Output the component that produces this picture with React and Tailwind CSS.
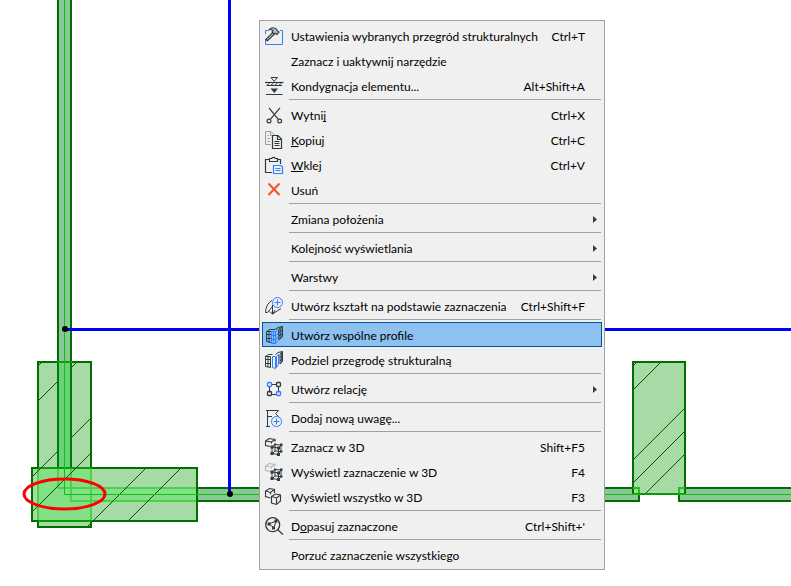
import React, { useState } from 'react';

const DARK = '#2f3a40';
const BLUE = '#2f80ff';

function Icon({ children }) {
    return (
        <svg width="20" height="21" viewBox="0 0 20 21" fill="none" stroke={DARK} strokeWidth="1" className="shrink-0" aria-hidden="true">
            {children}
        </svg>
    );
}

function SettingsIcon() {
    return (
        <Icon>
            <path d="M4 5.5H1.5V9M1.5 14V19.5H18.5V5.5H16" stroke={BLUE} />
            <path d="M9 7.5L2 14.2L3.3 15.8L10.5 9" fill="#f0f0f0" strokeWidth="1.2" />
            <path d="M5.2 4.6Q8.5 1.2 12.5 4.2L13.2 5.6L15 7L13 9.4L11.3 8.2L10.2 9.2L8 7L9 5.6Q7.3 4 5.2 4.6Z" fill="#b8bcbe" strokeWidth="1.1" />
        </Icon>
    );
}

function StoryIcon() {
    return (
        <Icon>
            <path d="M7 2.5H13.5L10.2 6.3Z" />
            <path d="M1 7.5H19.5" strokeWidth="1.2" />
            <path d="M3 10.3L5.5 8M7 10.3L9.5 8M11 10.3L13.5 8M15 10.3L17.5 8M2.5 10.5H18" />
            <path d="M6.5 13.5H14L10.3 18Z" fill={DARK} stroke="none" />
            <path d="M2 19.5H18.5" />
        </Icon>
    );
}

function CutIcon() {
    return (
        <Icon>
            <path d="M5 3.8L14.3 15.3M16 3.8L6.3 15.3" strokeWidth="1.2" />
            <circle cx="5" cy="17" r="1.9" strokeWidth="1.2" />
            <circle cx="15.7" cy="17" r="1.9" strokeWidth="1.2" />
        </Icon>
    );
}

function CopyIcon() {
    return (
        <Icon>
            <path d="M7 15.5H1.5V2.5H7L10.5 6M6.5 2.5V6.5H9M3.5 6.5H5M3.5 9.5H6M3.5 12.5H6" stroke="#9b9fa1" />
            <path d="M8.5 6.5H14L17.5 10V19.5H8.5ZM13.5 6.5V10.5H17.5" strokeWidth="1.2" />
            <path d="M10.5 12.5H15.5M10.5 14.5H15.5M10.5 16.5H15.5" />
        </Icon>
    );
}

function PasteIcon() {
    return (
        <Icon>
            <path d="M5.5 5.5H1.5V18.5H8M13 5.5H16.5V10" strokeWidth="1.2" />
            <path d="M5.5 7.5V4.5H7.5Q9.5 2.2 11.5 4.5H13.5V7.5Z" strokeWidth="1.2" />
            <path d="M9.5 11.5H17L18.5 13V19.5H9.5ZM11.5 14.5H16.5M11.5 16.5H16.5" stroke={BLUE} strokeWidth="1.2" />
        </Icon>
    );
}

function DeleteIcon() {
    return (
        <Icon>
            <path d="M4.5 4.5L15.5 16M15.5 4.5L4.5 16" stroke="#f4512c" strokeWidth="2" />
        </Icon>
    );
}

function ShapeIcon() {
    return (
        <Icon>
            <path d="M8 5.5Q2 8.5 1.5 17.5H3.5L8 12M8.5 10V19L17 13.5M5.5 16.5L8.5 19L11 15" />
            <circle cx="13.5" cy="7.5" r="5" fill="#f0f0f0" stroke={BLUE} />
            <path d="M10.5 7.5H16.5M13.5 4.5V10.5" stroke={BLUE} />
        </Icon>
    );
}

function MergeProfileIcon() {
    return (
        <Icon>
            <path d="M2.5 7.5H7.5M2.5 7.5V17.5L7 18.5M5 7.5V18M2.5 10.5H7M2.5 14.5H7M2.5 7.5L6 5.5H11" />
            <path d="M7.5 7.5V19.5H11.5V7.5ZM9.5 7.5V19.5M7.5 11.5H11.5M7.5 15.5H11.5M11.5 7.5L14.5 5V16L11.5 19.5M11.5 11.5L14.5 9M11.5 15.5L14.5 13" stroke={BLUE} />
            <path d="M11 5.5L14 3.5L18.5 2.5V13L15 15.5V5L18.5 2.5M16.8 4V14M15 8.5L18.5 6M15 12L18.5 9.5" />
        </Icon>
    );
}

function SplitProfileIcon() {
    return (
        <Icon>
            <path d="M1.5 7.5H6.5V18.5L1.5 17.5ZM4 7.5V18M1.5 10.5H6.5M1.5 14.5H6.5M1.5 7.5L4.5 5.5H8.5" />
            <path d="M8.5 7.5H11.5V19.5L8.5 18.5ZM12.5 7.5L14.5 5.5V15.5L12.5 18.5Z" stroke={BLUE} />
            <path d="M11.5 5.5L14 3.5L18.5 2.5V12.5L16 15V5L18.5 2.5M17.3 4V13.5M16 8.5L18.5 6M16 12L18.5 9.5" />
        </Icon>
    );
}

function RelationIcon() {
    return (
        <Icon>
            <path d="M7 6.5H13M7 16.5H13M5.5 8.5V14.5M14.5 8.5V14.5" />
            <rect x="3.5" y="4.5" width="4" height="4" rx="1" stroke={BLUE} strokeWidth="1.3" />
            <rect x="12.5" y="4.5" width="4" height="4" rx="1" strokeWidth="1.3" />
            <rect x="3.5" y="13.5" width="4" height="4" rx="1" strokeWidth="1.3" />
            <rect x="12.5" y="13.5" width="4" height="4" rx="1" stroke={BLUE} strokeWidth="1.3" />
        </Icon>
    );
}

function NoteIcon() {
    return (
        <Icon>
            <path d="M2 19.5H6M3.5 19.5V3.5M2 3.5H14.5L11.5 6.5L14.5 9.5M3.5 9.5H8" />
            <circle cx="12.5" cy="14.5" r="5" stroke={BLUE} />
            <path d="M9.5 14.5H15.5M12.5 11.5V17.5" stroke={BLUE} />
        </Icon>
    );
}

function SelectCubeIcon({ back = DARK }) {
    return (
        <Icon>
            <path d="M6 10.5L1.5 9.5V5L5 2.5L11 3.5V5.5M1.5 5L7.5 6L11 3.5M7.5 6V7.5" stroke={back} strokeWidth="1.1" />
            <path d="M8 11L11 8.5L17 9L14.5 12L8 11V17.5L14.5 18.5V12M17 9V15.5L14.5 18.5M11 8.5V15L8 17.5M11 15L17 15.5" />
            <path d="M6.5 9.5h3v3h-3zM13 10.5h3v3h-3zM10 7.5h2v2h-2zM16 7.5h2.5v2.5h-2.5zM6.5 16h3v3h-3zM13 17h3v3h-3zM16 14.5h2.5v2h-2.5z" fill={DARK} stroke="none" />
        </Icon>
    );
}

function CubesIcon() {
    return (
        <Icon>
            <path d="M6.5 12L1.5 10.5V5L5.5 2.5L10.5 3.5V7M1.5 5L6.5 6.5L10.5 3.5M6.5 6.5V8.5" strokeWidth="1.1" />
            <path d="M7.5 10.5L11.5 8L16.5 9V15L12.5 18.5L7.5 17ZM7.5 10.5L12.5 12L16.5 9M12.5 12V18.5" fill="#f0f0f0" strokeWidth="1.1" />
        </Icon>
    );
}

function FitIcon() {
    return (
        <Icon>
            <circle cx="8.7" cy="9.7" r="7" strokeWidth="1.3" />
            <path d="M13.5 14.5L19 19.5" strokeWidth="1.3" />
            <path d="M5 9L12 6L10 13Z" />
            <path d="M3.5 7.5h3v3h-3zM10.5 4.5h3v3h-3zM8 11.5h3v3h-3z" fill={DARK} stroke="none" />
        </Icon>
    );
}

const menuGroups = [
    [
        { label: 'Ustawienia wybranych przegród strukturalnych', keys: 'Ctrl+T', icon: <SettingsIcon /> },
        { label: 'Zaznacz i uaktywnij narzędzie' },
        { label: 'Kondygnacja elementu...', keys: 'Alt+Shift+A', icon: <StoryIcon /> },
    ],
    [
        { label: <>Wytni<u>j</u></>, keys: 'Ctrl+X', icon: <CutIcon /> },
        { label: <><u>K</u>opiuj</>, keys: 'Ctrl+C', icon: <CopyIcon /> },
        { label: <><u>W</u>klej</>, keys: 'Ctrl+V', icon: <PasteIcon /> },
        { label: 'Usuń', icon: <DeleteIcon /> },
    ],
    [{ label: 'Zmiana położenia', submenu: true }],
    [{ label: 'Kolejność wyświetlania', submenu: true }],
    [{ label: 'Warstwy', submenu: true }],
    [{ label: 'Utwórz kształt na podstawie zaznaczenia', keys: 'Ctrl+Shift+F', icon: <ShapeIcon /> }],
    [
        { label: 'Utwórz wspólne profile', id: 'merge', icon: <MergeProfileIcon /> },
        { label: 'Podziel przegrodę strukturalną', icon: <SplitProfileIcon /> },
    ],
    [{ label: 'Utwórz relację', submenu: true, icon: <RelationIcon /> }],
    [{ label: 'Dodaj nową uwagę...', icon: <NoteIcon /> }],
    [
        { label: 'Zaznacz w 3D', keys: 'Shift+F5', icon: <SelectCubeIcon /> },
        { label: 'Wyświetl zaznaczenie w 3D', keys: 'F4', icon: <SelectCubeIcon back="#b4b7b8" /> },
        { label: 'Wyświetl wszystko w 3D', keys: 'F3', icon: <CubesIcon /> },
    ],
    [{ label: <>D<u>o</u>pasuj zaznaczone</>, keys: "Ctrl+Shift+'", icon: <FitIcon /> }],
    [{ label: 'Porzuć zaznaczenie wszystkiego' }],
];

function MenuItem({ item, active, onHover }) {
    return (
        <button
            type="button"
            role="menuitem"
            aria-haspopup={item.submenu ? 'menu' : undefined}
            onMouseEnter={onHover}
            className={`flex h-[25px] w-full items-center gap-[7px] border pl-px text-left ${active ? 'border-[#005499] bg-[#8ec1ef]' : 'border-transparent'}`}
        >
            {item.icon || <span className="w-5 shrink-0" />}
            <span className="flex-1 whitespace-nowrap pt-0.5 [text-decoration-skip-ink:none]">{item.label}</span>
            {item.keys && <span className="mr-4 whitespace-nowrap pt-0.5">{item.keys}</span>}
            {item.submenu && (
                <svg width="4" height="9" viewBox="0 -2 4 9" className="mr-1 shrink-0" aria-hidden="true">
                    <path d="M0 0L4 3.5L0 7Z" fill="#3c3c3c" />
                </svg>
            )}
        </button>
    );
}

function ContextMenu() {
    const [activeId, setActiveId] = useState('merge');

    return (
        <div role="menu" className="absolute left-[259px] top-5 w-[346px] border border-[#a0a0a0] bg-[#f0f0f0] p-0.5">
            {menuGroups.map((group, g) => (
                <React.Fragment key={g}>
                    {g > 0 && <hr className="mb-0.5 ml-[27px] mr-px mt-px border-[#a0a0a0]" />}
                    {group.map((item, i) => {
                        const id = item.id || `${g}-${i}`;
                        return <MenuItem key={id} item={item} active={activeId === id} onHover={() => setActiveId(id)} />;
                    })}
                </React.Fragment>
            ))}
        </div>
    );
}

function FloorPlan() {
    return (
        <svg className="block h-screen w-full" fill="none" aria-hidden="true">
            {/* thin walls */}
            <rect x="57" y="0" width="15" height="502" fill="#8ac796" />
            <rect x="72" y="487" width="568" height="15" fill="#8ac796" />
            <rect x="678" y="487" width="100%" height="15" fill="#8ac796" />
            <path d="M58 0V488M71 0V502" stroke="#006f00" strokeWidth="2" />
            <path d="M57 488H639V501H70" stroke="#006f00" strokeWidth="2" />
            <rect x="679" y="488" width="100%" height="13" stroke="#006f00" strokeWidth="2" />

            {/* columns with hatching */}
            <rect x="38" y="362" width="53" height="165" fill="#a6dba6" stroke="#006f00" strokeWidth="2" />
            <rect x="57" y="363" width="15" height="105" fill="#69d177" />
            <path d="M58 362V468M71 362V468" stroke="#007a00" strokeWidth="2" />
            <path d="M57 362H72" stroke="#109c10" strokeWidth="2" />
            <rect x="32" y="468" width="165" height="53" fill="#a6dba6" stroke="#006f00" strokeWidth="2" />
            <rect x="39" y="469" width="52" height="51" fill="#83e085" />
            <rect x="72" y="488" width="124" height="13" fill="#83e085" />
            <path d="M38 469V520M91 469V520" stroke="#4ad24a" strokeWidth="2" />
            <path d="M58 469V488H196M71 469V501H196" stroke="#4ad24a" strokeWidth="2" />
            <path d="M38 468H92M38 521H92" stroke="#0a9a0a" strokeWidth="2" />
            <rect x="633" y="362" width="52" height="132" fill="#a6dba6" stroke="#006f00" strokeWidth="2" />
            <path d="M633 488H639V494M685 488H679V494" fill="#83e085" stroke="#27bd27" strokeWidth="2" />
            <path d="M632 494H686" stroke="#0a9a0a" strokeWidth="2" />
            <path
                d="M39 365L41 363M39 400L57 382M72 367L76 363M72 437L90 419M33 476L57 452M33 511L90 454M94 520L145 469M129 520L180 469M88 526L90 524M634 365L636 363M634 389L660 363M634 459L684 409M634 482L684 432M646 493L684 455"
                stroke="#0e4a0e"
            />

            {/* reference lines */}
            <path d="M64.5 0V494.5H640" stroke="#12bd12" />
            <rect x="678" y="494" width="100%" height="1" fill="#12bd12" />

            {/* grid axes */}
            <rect x="228" y="0" width="3" height="494" fill="#0000ff" />
            <rect x="65" y="328" width="100%" height="3" fill="#0000ff" />
            <circle cx="65" cy="329" r="3" fill="#000" />
            <circle cx="230" cy="494" r="3" fill="#000" />

            <ellipse cx="64.5" cy="494" rx="40.5" ry="15" stroke="#ff0000" strokeWidth="3" />
        </svg>
    );
}

export default function App() {
    return (
        <main className="relative min-h-screen overflow-hidden bg-white font-['Lato','Noto_Sans',sans-serif] text-[12px] leading-4 text-black">
            <FloorPlan />
            <ContextMenu />
        </main>
    );
}
